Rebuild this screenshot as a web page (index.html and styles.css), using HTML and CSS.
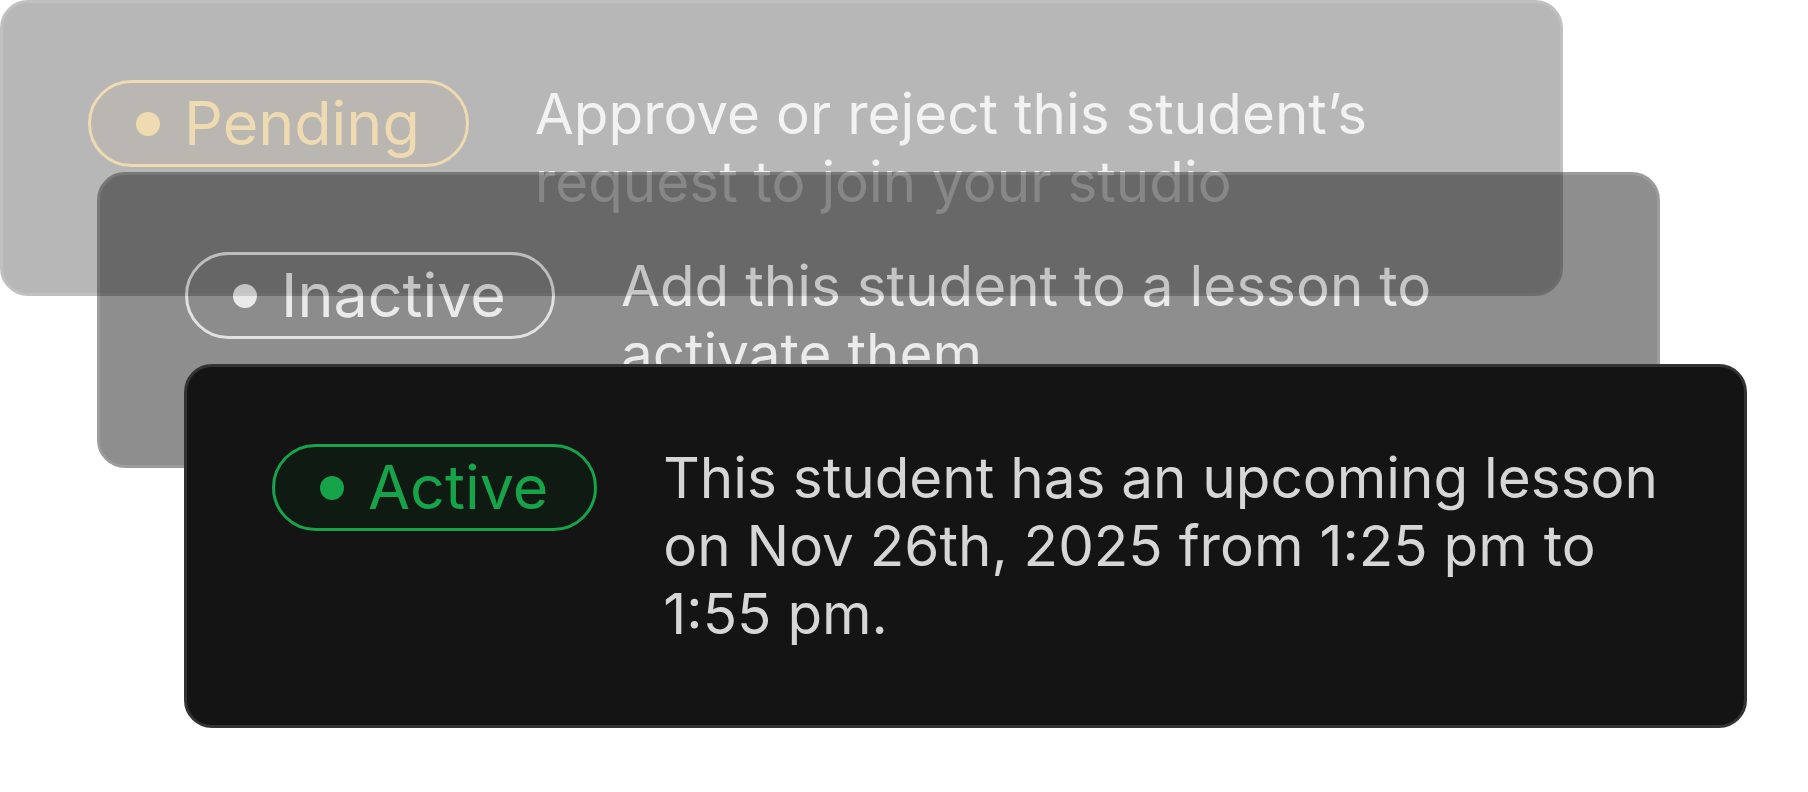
FILE: index.html
```html
<!DOCTYPE html>
<html lang="en">
<head>
<meta charset="utf-8">
<title>Student status</title>
<link rel="stylesheet" href="styles.css">
</head>
<body>
<div class="stack">
  <div class="card card--pending">
    <span class="badge badge--pending"><span class="dot"></span>Pending</span>
    <p class="desc">Approve or reject this student’s request to join your studio</p>
  </div>
  <div class="card card--inactive">
    <span class="badge badge--inactive"><span class="dot"></span>Inactive</span>
    <p class="desc">Add this student to a lesson to activate them</p>
  </div>
  <div class="card card--active">
    <span class="badge badge--active"><span class="dot"></span>Active</span>
    <p class="desc">This student has an upcoming lesson on Nov 26th, 2025 from 1:25 pm to 1:55 pm.</p>
  </div>
</div>
</body>
</html>
```

FILE: styles.css
```css
html, body {
  margin: 0;
  padding: 0;
  background: #ffffff;
}

body {
  font-family: Inter, "Noto Sans", "Liberation Sans", sans-serif;
}

.stack {
  display: flex;
  flex-direction: column;
  align-items: flex-start;
}

.card {
  position: relative;
  box-sizing: border-box;
  width: 1563px;
  display: flex;
  align-items: flex-start;
  gap: 66px;
  padding: 77px 70px 77px 85px;
  background: #141414;
  border: 3px solid #333333;
  border-radius: 28px;
}

.card--pending {
  z-index: 1;
  opacity: 0.3;
}

.card--inactive {
  z-index: 2;
  opacity: 0.48;
  margin-left: 97px;
  margin-top: -124px;
}

.card--active {
  z-index: 3;
  margin-left: 184px;
  margin-top: -104px;
}

.badge {
  box-sizing: border-box;
  flex-shrink: 0;
  display: inline-flex;
  align-items: center;
  gap: 24px;
  height: 87px;
  padding: 0 46px 0 45px;
  border: 3px solid currentColor;
  border-radius: 999px;
  font-size: 61px;
  font-weight: 400;
  line-height: 1;
  white-space: nowrap;
}

.dot {
  width: 24px;
  height: 24px;
  border-radius: 50%;
  background: currentColor;
  flex-shrink: 0;
}

.badge--pending {
  color: #ca8a04;
  border-color: #ca8a04;
  background: #1e1005;
}

.badge--inactive {
  color: #d4d4d4;
  border-color: #c4c4c4;
  background: #101010;
}

.badge--active {
  color: #16a34a;
  border-color: #16a34a;
  background: #0f1a12;
}

.desc {
  flex: 1;
  margin: 0;
  font-size: 56.6px;
  line-height: 68px;
  font-weight: 400;
  color: #d6d6d6;
}
```
